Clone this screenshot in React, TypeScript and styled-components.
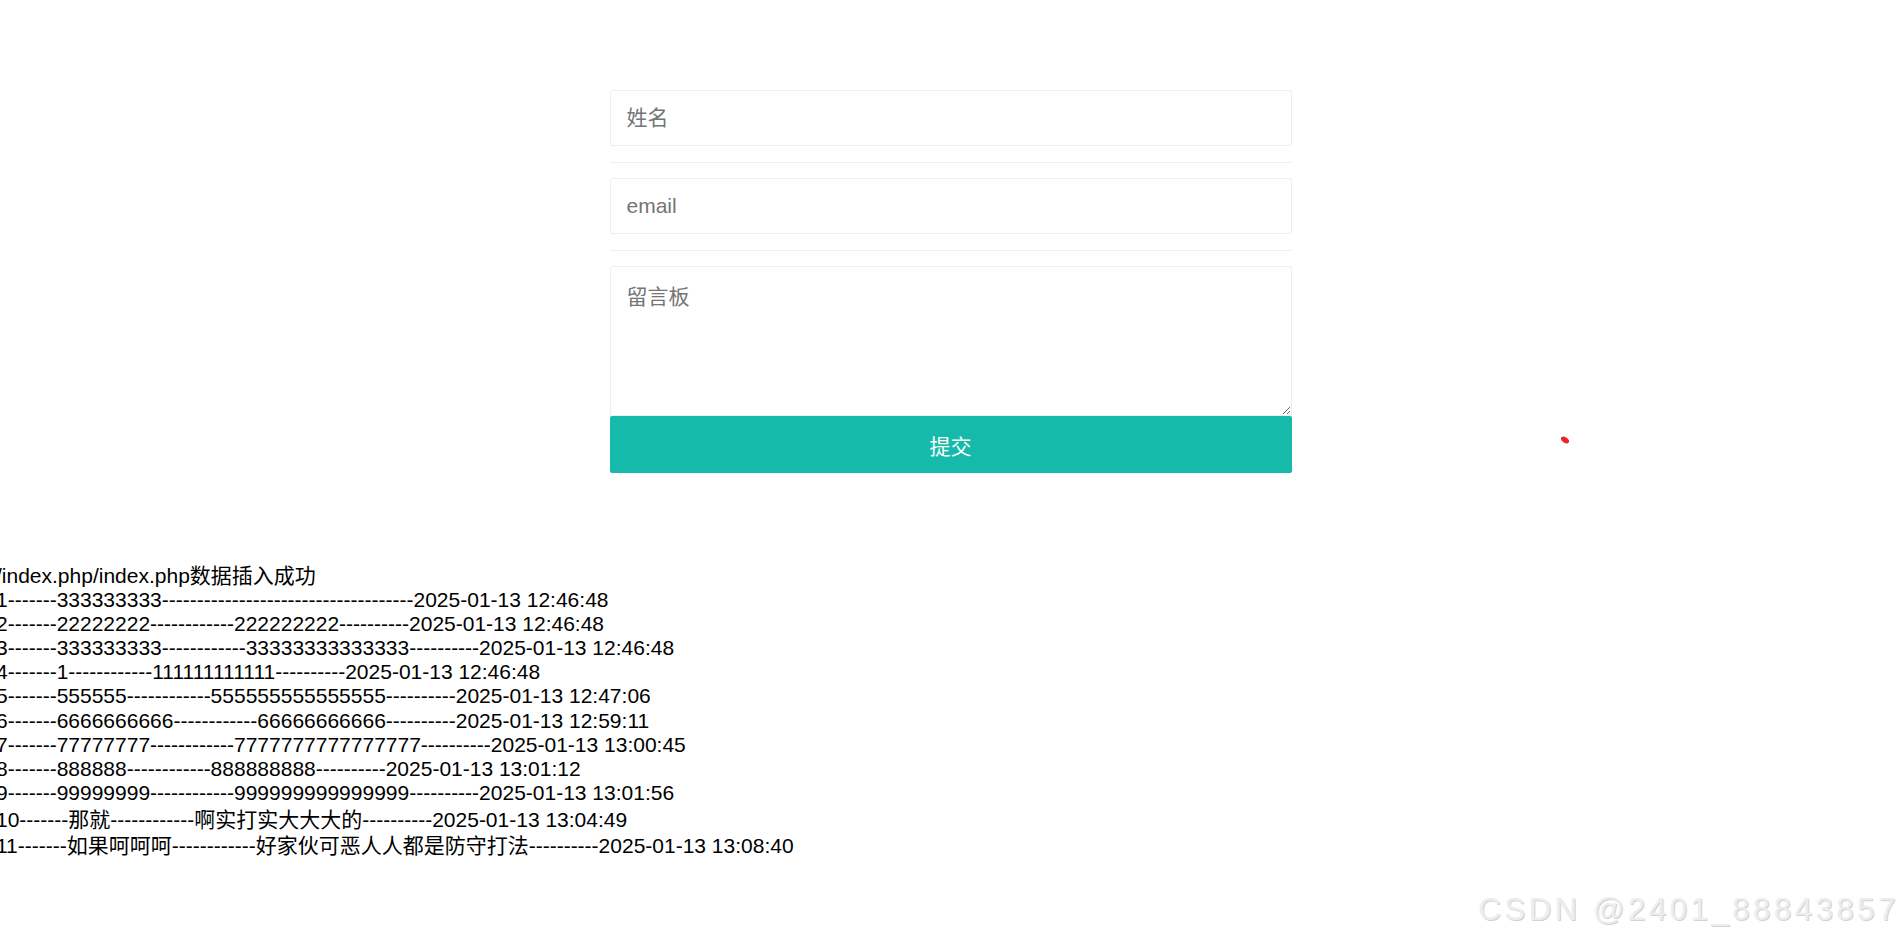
import React from "react";
import styled, { createGlobalStyle } from "styled-components";

const GlobalStyle = createGlobalStyle`
  html, body {
    margin: 0;
    padding: 0;
    background: #fff;
  }
  body {
    font-family: "Liberation Sans", Arial, "Noto Sans CJK SC", sans-serif;
    font-size: 21px;
    color: #000;
  }
`;

type Row = { id: number; name: string; content: string; time: string; lead?: number };

// rows echoed by index.php after the insert
const rows: Row[] = [
  { id: 1, name: "333333333", content: "--------------", time: "2025-01-13 12:46:48" },
  { id: 2, name: "22222222", content: "222222222", time: "2025-01-13 12:46:48" },
  { id: 3, name: "333333333", content: "33333333333333", time: "2025-01-13 12:46:48" },
  { id: 4, name: "1", content: "111111111111", time: "2025-01-13 12:46:48" },
  { id: 5, name: "555555", content: "555555555555555", time: "2025-01-13 12:47:06" },
  { id: 6, name: "6666666666", content: "66666666666", time: "2025-01-13 12:59:11" },
  { id: 7, name: "77777777", content: "7777777777777777", time: "2025-01-13 13:00:45" },
  { id: 8, name: "888888", content: "888888888", time: "2025-01-13 13:01:12" },
  { id: 9, name: "99999999", content: "999999999999999", time: "2025-01-13 13:01:56" },
  { id: 10, name: "那就", content: "啊实打实大大大的", time: "2025-01-13 13:04:49", lead: 3.2 },
  { id: 11, name: "如果呵呵呵", content: "好家伙可恶人人都是防守打法", time: "2025-01-13 13:08:40", lead: 1.9 },
];

export default function App() {
  return (
    <Page>
      <GlobalStyle />
      <Form onSubmit={(e) => e.preventDefault()}>
        <Field type="text" placeholder="姓名" />
        <Rule />
        <Field type="text" placeholder="email" />
        <Rule />
        <Message placeholder="留言板" />
        <Submit type="submit">提交</Submit>
      </Form>

      <Log>
        <Line>/index.php/index.php数据插入成功</Line>
        {rows.map((r) => (
          <Line key={r.id} $lead={r.lead ?? 0}>
            {`${r.id}-------${r.name}------------${r.content}----------${r.time}`}
          </Line>
        ))}
      </Log>

      <CursorDot viewBox="0 0 12 10" aria-hidden>
        <ellipse cx="6" cy="5" rx="4.5" ry="2.6" transform="rotate(35 6 5)" fill="#e8232b" />
      </CursorDot>

      <Watermark>CSDN @2401_88843857</Watermark>
    </Page>
  );
}

const Page = styled.div`
  position: relative;
  width: 100%;
  min-height: 943px;
  overflow: hidden;
`;

const Form = styled.form`
  width: 682px;
  margin: 90px auto 0;
  padding-left: 1px;
  display: flex;
  flex-direction: column;
`;

const Field = styled.input`
  box-sizing: border-box;
  height: 56px;
  width: 100%;
  padding: 0 16px;
  border: 1px solid #eee;
  border-radius: 2px;
  font-family: "Liberation Sans", Arial, "Noto Sans CJK SC", sans-serif;
  font-size: 21px;
  color: #333;
  outline: none;
  &::placeholder {
    color: #757575;
  }
`;

const Rule = styled.hr`
  width: 100%;
  margin: 16px 0 15px;
  border: 0;
  border-top: 1px solid #eee;
`;

const Message = styled.textarea`
  box-sizing: border-box;
  display: block;
  height: 150px;
  width: 100%;
  padding: 13px 16px;
  border: 1px solid #eee;
  border-radius: 2px;
  font-family: "Liberation Sans", Arial, "Noto Sans CJK SC", sans-serif;
  font-size: 21px;
  color: #333;
  outline: none;
  &::placeholder {
    color: #757575;
  }
`;

const Submit = styled.button`
  height: 57px;
  width: 100%;
  border: 0;
  border-radius: 2px;
  background: #16baaa;
  color: #fff;
  font-family: "Liberation Sans", Arial, "Noto Sans CJK SC", sans-serif;
  font-size: 21px;
  cursor: pointer;
`;

const Log = styled.div`
  margin: 91px 0 0 -4px;
  white-space: nowrap;
`;

const Line = styled.div<{ $lead?: number }>`
  line-height: 24.1px;
  margin-top: ${(p) => p.$lead ?? 0}px;
`;

const CursorDot = styled.svg`
  position: absolute;
  left: 1559px;
  top: 435px;
  width: 12px;
  height: 10px;
`;

const Watermark = styled.div`
  position: absolute;
  right: 1px;
  bottom: 15px;
  font-family: "Liberation Sans", Arial, sans-serif;
  font-size: 31px;
  letter-spacing: 3.6px;
  color: #ededed;
  text-shadow: 1px 1px 0 #d2d2d2, -0.5px -0.5px 0 #fafafa;
  pointer-events: none;
`;
